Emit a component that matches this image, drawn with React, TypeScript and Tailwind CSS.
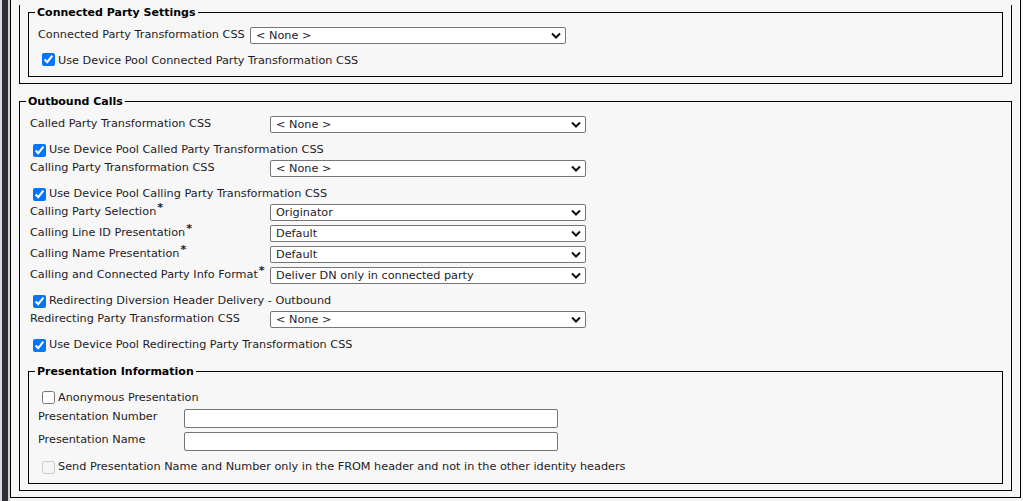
const font = "font-['DejaVu_Sans',sans-serif]"

type Row =
  | { kind: 'select'; label: string; value: string; required?: boolean }
  | { kind: 'check'; label: string }

const outboundRows: Row[] = [
  { kind: 'select', label: 'Called Party Transformation CSS', value: '< None >' },
  { kind: 'check', label: 'Use Device Pool Called Party Transformation CSS' },
  { kind: 'select', label: 'Calling Party Transformation CSS', value: '< None >' },
  { kind: 'check', label: 'Use Device Pool Calling Party Transformation CSS' },
  { kind: 'select', label: 'Calling Party Selection', value: 'Originator', required: true },
  { kind: 'select', label: 'Calling Line ID Presentation', value: 'Default', required: true },
  { kind: 'select', label: 'Calling Name Presentation', value: 'Default', required: true },
  {
    kind: 'select',
    label: 'Calling and Connected Party Info Format',
    value: 'Deliver DN only in connected party',
    required: true,
  },
  { kind: 'check', label: 'Redirecting Diversion Header Delivery - Outbound' },
  { kind: 'select', label: 'Redirecting Party Transformation CSS', value: '< None >' },
  { kind: 'check', label: 'Use Device Pool Redirecting Party Transformation CSS' },
]

function Chevron() {
  return (
    <svg width="10" height="7" viewBox="0 0 10 7" className="shrink-0">
      <path d="M1 1.5 5 5.5 9 1.5" fill="none" stroke="#111" strokeWidth="2" />
    </svg>
  )
}

function FakeSelect({ value }: { value: string }) {
  return (
    <div className="flex h-[17px] w-[316px] shrink-0 items-center justify-between rounded-[2px] border border-[#767676] bg-white pl-[5px] pr-[4px] leading-none text-[#1f1a2b]">
      <span>{value}</span>
      <Chevron />
    </div>
  )
}

function Check({ checked = false, disabled = false }: { checked?: boolean; disabled?: boolean }) {
  return (
    <input
      type="checkbox"
      defaultChecked={checked}
      disabled={disabled}
      className="m-0 h-[13px] w-[13px] shrink-0"
    />
  )
}

function Star() {
  return <span className="relative -top-[4px] ml-[1px] font-bold">*</span>
}

function Legend({ children }: { children: React.ReactNode }) {
  return (
    <legend className="ml-[6px] px-[2px] text-[11px] font-bold leading-[14px] text-black">
      <span className="relative top-[1px]">{children}</span>
    </legend>
  )
}

export default function App() {
  return (
    <div className={`flex h-[501px] w-[1023px] overflow-hidden bg-[#f7f7f7] text-[11.25px] text-[#1e1b26] ${font}`}>
      <div className="w-[2px] shrink-0 bg-[#d9d9d9]" />
      <div className="w-[6px] shrink-0 bg-[#2c2c3a]" />
      <div className="w-[2px] shrink-0 bg-[#d0d0d0]" />

      <div className="mb-auto w-[1011px] shrink-0 border-x border-b border-black pb-[6px]">
        {/* connected party (box continues above the viewport) */}
        <div className="mx-[8px] border-x border-b border-black pb-[6px]">
          <fieldset className="mx-[8px] mt-[5px] border border-black">
            <Legend>Connected Party Settings</Legend>
            <div className="pb-[7px] pl-[9px] pt-[6px]">
              <div className="flex h-[21px] items-center">
                <span className="w-[212px] shrink-0">Connected Party Transformation CSS</span>
                <FakeSelect value="< None >" />
              </div>
              <div className="flex h-[23px] items-start pt-[5px]">
                <div className="flex items-center">
                  <span className="ml-[4px] mr-[3px] flex">
                    <Check checked />
                  </span>
                  <span className="translate-y-[2px]">Use Device Pool Connected Party Transformation CSS</span>
                </div>
              </div>
            </div>
          </fieldset>
        </div>

        {/* outbound calls */}
        <fieldset className="mx-[8px] mt-[10px] border border-black pb-[6px]">
          <Legend>Outbound Calls</Legend>
          <div className="pl-[10px] pt-[6px]">
            {outboundRows.map((row) =>
              row.kind === 'select' ? (
                <div key={row.label} className="flex h-[21px] items-center">
                  <span className="w-[240px] shrink-0">
                    {row.label}
                    {row.required && <Star />}
                  </span>
                  <FakeSelect value={row.value} />
                </div>
              ) : (
                <div key={row.label} className="flex h-[23px] items-start pt-[7px]">
                  <div className="flex items-center">
                    <span className="ml-[3px] mr-[3px] flex">
                      <Check checked />
                    </span>
                    <span>{row.label}</span>
                  </div>
                </div>
              ),
            )}
          </div>

          <fieldset className="mx-[8px] mt-[11px] border border-black">
            <Legend>Presentation Information</Legend>
            <div className="pb-[5px] pl-[9px] pt-[11px]">
              <div className="flex h-[17px] items-center">
                <span className="ml-[4px] mr-[3px] flex">
                  <Check />
                </span>
                <span className="translate-y-[1px]">Anonymous Presentation</span>
              </div>
              {['Presentation Number', 'Presentation Name'].map((label) => (
                <div key={label} className="flex h-[23px] items-center">
                  <span className="w-[146px] shrink-0">{label}</span>
                  <input
                    type="text"
                    className="h-[19px] w-[374px] translate-y-[1px] rounded-[2px] border border-[#767676] bg-white px-[2px] outline-none"
                  />
                </div>
              ))}
              <div className="flex h-[26px] items-start pt-[7px]">
                <div className="flex items-center">
                  <span className="ml-[4px] mr-[3px] flex">
                    <Check disabled />
                  </span>
                  <span>
                    Send Presentation Name and Number only in the FROM header and not in the other identity
                    headers
                  </span>
                </div>
              </div>
            </div>
          </fieldset>
        </fieldset>
      </div>
    </div>
  )
}
